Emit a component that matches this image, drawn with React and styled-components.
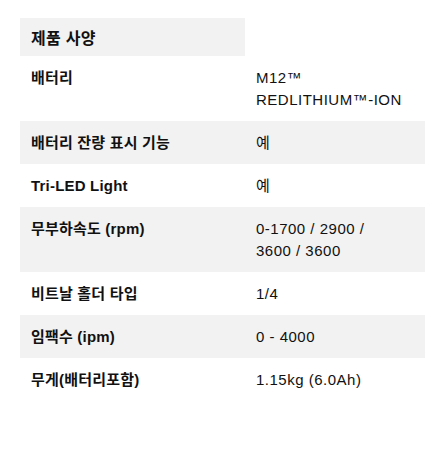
import styled, { createGlobalStyle } from 'styled-components';

const GlobalStyle = createGlobalStyle`
	body {
		margin: 0;
		background: #fff;
		font-family: 'Liberation Sans', Arial, 'Noto Sans CJK KR', sans-serif;
		color: #111;
	}
`;

// each value is a list of lines, as they break in the original layout
const specs = [
	['배터리', ['M12™', 'REDLITHIUM™-ION']],
	['배터리 잔량 표시 기능', ['예']],
	['Tri-LED Light', ['예']],
	['무부하속도 (rpm)', ['0-1700 / 2900 /', '3600 / 3600']],
	['비트날 홀더 타입', ['1/4']],
	['임팩수 (ipm)', ['0 - 4000']],
	['무게(배터리포함)', ['1.15kg (6.0Ah)']],
];

function App() {
	return (
		<Page>
			<GlobalStyle />
			<Table>
				<Heading>제품 사양</Heading>
				{specs.map(([label, lines], index) => (
					<Row key={label} $shaded={index % 2 === 1}>
						<Label>{label}</Label>
						<Value>
							{lines.map(line => (
								<Line key={line}>{line}</Line>
							))}
						</Value>
					</Row>
				))}
			</Table>
		</Page>
	);
}

export default App;

const Page = styled.div`
	padding: 18px 23px 0 20px;
	width: 405px;
`;

const Table = styled.div`
	display: flex;
	flex-direction: column;
	width: 405px;
`;

const Heading = styled.div`
	width: 225px;
	height: 38px;
	box-sizing: border-box;
	padding: 0 11px;
	display: flex;
	align-items: center;
	background: #f2f2f2;
	font-size: 16px;
	font-weight: bold;
	letter-spacing: 0.3px;
`;

const Row = styled.div`
	display: grid;
	grid-template-columns: 225px 180px;
	background: ${p => (p.$shaded ? '#f2f2f2' : '#fff')};
	font-size: 15px;
	line-height: 22px;
`;

const Label = styled.div`
	padding: 11px 11px 10px;
	font-weight: bold;
	letter-spacing: 0.2px;
`;

const Value = styled.div`
	padding: 11px 11px 10px;
	letter-spacing: 0.5px;
`;

const Line = styled.div`
	white-space: nowrap;
`;
